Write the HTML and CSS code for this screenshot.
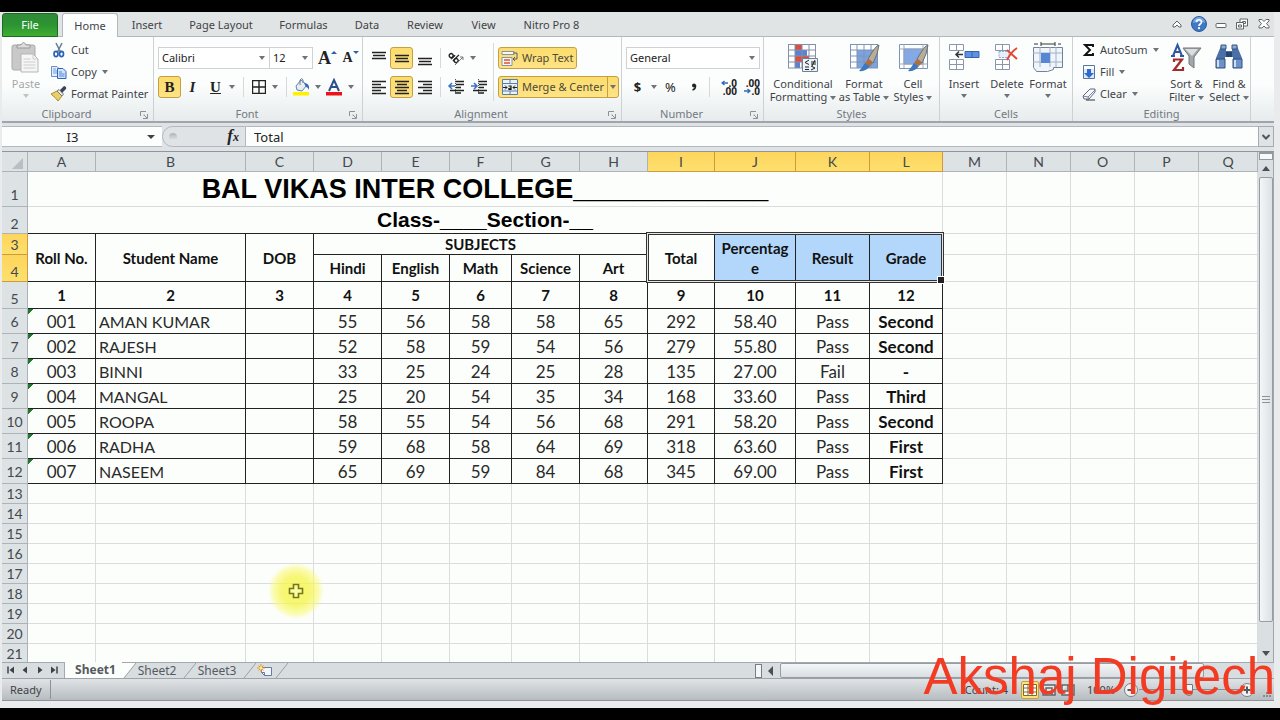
FILE: index.html
```html
<!DOCTYPE html>
<html lang="en">
<head>
<meta charset="utf-8">
<title>Spreadsheet</title>
<link rel="stylesheet" href="styles.css">
</head>
<body>
<main class="app">
  <nav class="tabs">
    <button class="tab tab-file">File</button>
    <button class="tab tab-active">Home</button>
    <button class="tab tab-insert">Insert</button>
    <button class="tab tab-layout">Page Layout</button>
    <button class="tab tab-formulas">Formulas</button>
    <button class="tab tab-data">Data</button>
    <button class="tab tab-review">Review</button>
    <button class="tab tab-view">View</button>
    <button class="tab tab-nitro">Nitro Pro 8</button>
    <div class="window-controls">
      <button aria-label="Collapse ribbon"><svg width="12" height="16" viewBox="0 0 12 16"><path d="M2 9 6 5l4 4v2H8L6 9l-2 2H2z" fill="#fff" stroke="#60656a"/></svg></button>
      <button aria-label="Help"><svg width="16" height="16" viewBox="0 0 16 16"><circle cx="8" cy="8" r="7.5" fill="#3f78c4" stroke="#2c5aa0"/><path d="M2 7a6 6 0 0 1 12 0q-6-3-12 0z" fill="#79a8e0"/><path d="M5.500 6.200C5.500 3 10.500 3 10.500 6c0 2-2.500 2-2.500 4" fill="none" stroke="#fff" stroke-width="1.700"/><circle cx="8" cy="12.200" r="1.100" fill="#fff"/></svg></button>
      <button aria-label="Minimize"><svg width="12" height="16" viewBox="0 0 12 16"><rect x="1" y="7.500" width="10" height="4" rx="1" fill="#fff" stroke="#60656a"/></svg></button>
      <button aria-label="Restore"><svg width="14" height="16" viewBox="0 0 14 16"><path d="M5 3h7.500v7H5z" fill="#fff" stroke="#60656a"/><path d="M7.500 5.500h3v2h-3z" fill="none" stroke="#60656a"/><path d="M1.500 6.500h7v6.500h-7z" fill="#fff" stroke="#60656a"/><path d="M3.500 9h3v2h-3z" fill="none" stroke="#60656a"/></svg></button>
      <button aria-label="Close"><svg width="14" height="16" viewBox="0 0 14 16"><path d="M2 3.500h3l2 2 2-2h3v1.500L9.500 7.500 12 10.500V12H9L7 10l-2 2H2v-1.500l2.500-3L2 5z" fill="#fff" stroke="#60656a"/></svg></button>
    </div>
  </nav>

  <section class="ribbon">
    <div class="group group-clipboard">
      <div class="group-body">
        <button class="big big-paste" disabled><svg width="30" height="32" viewBox="0 0 30 32"><rect x="1" y="3" width="23" height="25" rx="2" fill="#c9c9c9" stroke="#aaa"/><path d="M6 6V3h4q2.500-5 5 0h4v3z" fill="#ddd" stroke="#999"/><path d="M10 12h12l5 5v13H10z" fill="#f6f6f6" stroke="#b5b5b5"/><path d="M22 12v5h5M12.500 17h7M12.500 20h12M12.500 23h12M12.500 26h12" fill="none" stroke="#ccc"/></svg><span>Paste</span><i class="caret"></i></button>
        <div class="stack">
          <button class="small"><svg width="18" height="16" viewBox="0 0 18 16"><path d="m6 1 5 10M12 1 7 11" stroke="#6b8095" stroke-width="1.600"/><ellipse cx="6" cy="12" rx="2" ry="2.600" fill="none" stroke="#2d62b5" stroke-width="1.700"/><ellipse cx="11.500" cy="12" rx="2" ry="2.600" fill="none" stroke="#2d62b5" stroke-width="1.700"/></svg>Cut</button>
          <button class="small"><svg width="18" height="16" viewBox="0 0 18 16"><path d="M1.500 2.500H7l3 3v7H1.500z" fill="#e6f0fc" stroke="#6d8fc0"/><path d="M3 5h3M3 7h5M3 9h5" stroke="#6d9ade"/><path d="M7.500 4.500H13l3 3v7H7.500z" fill="#d2e4fb" stroke="#2f66ba"/><path d="M9 8h3M9 10h5.500M9 12h5.500" stroke="#4d87da"/></svg>Copy<i class="caret"></i></button>
          <button class="small"><svg width="18" height="16" viewBox="0 0 18 16"><path d="m1 8 6-3 5 5-4 5q-2-3-7-7z" fill="#e8cf68" stroke="#b18d2c"/><path d="m7 5 2-1.500L13.500 8 12 10z" fill="#eee" stroke="#777"/><path d="m10 4 4-4q3 1 2 3l-4 4z" fill="#3d4358"/></svg>Format Painter</button>
        </div>
      </div>
      <footer class="with-launcher">Clipboard<svg class="launcher" width="8" height="8" viewBox="0 0 8 8"><path d="M.5 5V.5H6M3.500 4h1M7.500 3v4.500H3M7 7 4 4" fill="none" stroke="#8c9298"/></svg></footer>
    </div>

    <div class="group group-font">
      <div class="group-body rows">
        <div class="row">
          <label class="combo combo-font"><select aria-label="Font"><option>Calibri</option></select></label>
          <label class="combo combo-size"><select aria-label="Font size"><option>12</option></select></label>
          <button class="tool grow-font" aria-label="Increase font size"><b class="serif">A</b><i class="up"></i></button>
          <button class="tool shrink-font" aria-label="Decrease font size"><b class="serif">A</b><i class="down"></i></button>
        </div>
        <div class="row">
          <button class="tool on"><b class="serif">B</b></button>
          <button class="tool"><b class="serif italic">I</b></button>
          <button class="tool"><b class="serif underline">U</b></button>
          <i class="caret"></i><i class="sep"></i>
          <button class="tool" aria-label="Borders"><svg width="14" height="14" viewBox="0 0 14 14"><path d="M.5.5h13v13H.5zM7 0v14M0 7h14" fill="none" stroke="#222" stroke-width="1.400"/></svg></button>
          <i class="caret"></i><i class="sep"></i>
          <button class="tool" aria-label="Fill color"><svg width="17" height="18" viewBox="0 0 17 18"><path d="m3 8 5-6 6 5-5 6-5-1z" fill="#e6edf6" stroke="#68809c"/><path d="M7 7V2q2-3 3 0v3" fill="none" stroke="#68809c"/><path d="M11 5q6 0 5 7-1-3-3-3z" fill="#3569b7"/><path d="M0 14h16v3.500H0z" fill="#fff000"/></svg></button>
          <i class="caret"></i>
          <button class="tool" aria-label="Font color"><svg width="17" height="18" viewBox="0 0 17 18"><path d="m3 13 5-11 5 11M5 9h6" fill="none" stroke="#2d4f8b" stroke-width="2"/><path d="M0 14h16v3.500H0z" fill="#ee1118"/></svg></button>
          <i class="caret"></i>
        </div>
      </div>
      <footer class="with-launcher">Font<svg class="launcher" width="8" height="8" viewBox="0 0 8 8"><path d="M.5 5V.5H6M3.500 4h1M7.500 3v4.500H3M7 7 4 4" fill="none" stroke="#8c9298"/></svg></footer>
    </div>

    <div class="group group-align">
      <div class="group-body">
        <div class="rows">
          <div class="row">
            <button class="tool" aria-label="Top align"><svg width="16" height="16" viewBox="0 0 16 16"><path d="M1 2.500h14M2 5.500h12M1 8.500h14" stroke="#222" stroke-width="1.600"/></svg></button>
            <button class="tool on" aria-label="Middle align"><svg width="16" height="16" viewBox="0 0 16 16"><path d="M1 5.500h14M2 8.500h12M1 11.500h14" stroke="#222" stroke-width="1.600"/></svg></button>
            <button class="tool" aria-label="Bottom align"><svg width="16" height="16" viewBox="0 0 16 16"><path d="M1 8.500h14M2 11.500h12M1 14.500h14" stroke="#222" stroke-width="1.600"/></svg></button>
            <i class="sep"></i>
            <button class="tool" aria-label="Orientation"><svg width="18" height="16" viewBox="0 0 18 16"><g transform="rotate(45 6 7)" fill="none" stroke="#222" stroke-width="1.400"><circle cx="3" cy="8" r="2"/><path d="M5.500 5v5.500M8 2v8.500"/><circle cx="10" cy="8" r="2"/></g><path d="m7 15 8-8M12 7h3v3" fill="none" stroke="#777"/></svg></button>
            <i class="caret"></i>
          </div>
          <div class="row">
            <button class="tool" aria-label="Align left"><svg width="16" height="16" viewBox="0 0 16 16"><path d="M1 2.500h14M1 5.500h9M1 8.500h14M1 11.500h9M1 14.500h14" stroke="#222" stroke-width="1.600"/></svg></button>
            <button class="tool on" aria-label="Center"><svg width="16" height="16" viewBox="0 0 16 16"><path d="M1 2.500h14M3 5.500h10M1 8.500h14M3 11.500h10M1 14.500h14" stroke="#222" stroke-width="1.600"/></svg></button>
            <button class="tool" aria-label="Align right"><svg width="16" height="16" viewBox="0 0 16 16"><path d="M1 2.500h14M6 5.500h9M1 8.500h14M6 11.500h9M1 14.500h14" stroke="#222" stroke-width="1.600"/></svg></button>
            <i class="sep"></i>
            <button class="tool" aria-label="Decrease indent"><svg width="17" height="16" viewBox="0 0 17 16"><path d="M7 2.500h9M8 5.500h8M8 8.500h5M2 11.500h14M7 14h6" stroke="#222" stroke-width="1.700"/><path d="M7 7H1m3-3L1 7l3 3" fill="none" stroke="#3870c8" stroke-width="1.500"/><path d="M7.500 0v16" stroke="#555" stroke-dasharray="1 1"/></svg></button>
            <button class="tool" aria-label="Increase indent"><svg width="17" height="16" viewBox="0 0 17 16"><path d="M7 2.500h9M8 5.500h8M8 8.500h5M2 11.500h14M7 14h6" stroke="#222" stroke-width="1.700"/><path d="M0 7h6M3 4l3 3-3 3" fill="none" stroke="#3870c8" stroke-width="1.500"/><path d="M7.500 0v16" stroke="#555" stroke-dasharray="1 1"/></svg></button>
          </div>
        </div>
        <i class="sep tall"></i>
        <div class="rows">
          <button class="labelled on"><svg width="18" height="17" viewBox="0 0 18 17"><path d="M1 1.500h12v3H1zM1 7.500h10v8H1z" fill="#f5f7f9" stroke="#8894a0"/><path d="M3 10h6M3 13h6" stroke="#d8542f" stroke-width="1.500"/><path d="M12 3h4v6h-4m2-2-2 2 2 2" fill="none" stroke="#4f5c66"/></svg>Wrap Text</button>
          <button class="labelled on merge"><svg width="18" height="17" viewBox="0 0 18 17"><path d="M1.500.5h15v15h-15zM1 4.500h16M1 12h16M9 0v4M9 12v4" fill="#eaf2fb" stroke="#5c7ea5"/><path d="M2 8.500h4M12 8.500h4M4 6.500l2 2-2 2M14 6.500l-2 2 2 2" fill="none" stroke="#222"/><path d="M7.500 7h2.500v3.500H8q-1-1.500 2-1.500" fill="none" stroke="#111" stroke-width="1.200"/></svg>Merge &amp; Center<span class="split"><i class="caret"></i></span></button>
        </div>
      </div>
      <footer class="with-launcher">Alignment<svg class="launcher" width="8" height="8" viewBox="0 0 8 8"><path d="M.5 5V.5H6M3.500 4h1M7.500 3v4.500H3M7 7 4 4" fill="none" stroke="#8c9298"/></svg></footer>
    </div>

    <div class="group group-number">
      <div class="group-body rows">
        <div class="row"><label class="combo combo-format"><select aria-label="Number format"><option>General</option></select></label></div>
        <div class="row">
          <button class="tool money"><b>$</b></button><i class="caret"></i>
          <button class="tool percent">%</button>
          <button class="tool" aria-label="Comma style"><svg width="8" height="14" viewBox="0 0 8 14"><circle cx="4" cy="5.500" r="2" fill="#222"/><path d="M5.500 5q.5 4-3 5" fill="none" stroke="#222" stroke-width="1.500"/></svg></button>
          <i class="sep"></i>
          <button class="tool decimals"><span><svg width="7" height="6" viewBox="0 0 7 6"><path d="M7 3H1m2.500-2L1 3l2.500 2" fill="none" stroke="#3468bb" stroke-width="1.400"/></svg>.0</span><span>.00</span></button>
          <button class="tool decimals"><span>.00</span><span><svg width="7" height="6" viewBox="0 0 7 6"><path d="M0 3h6M3.500 1 6 3 3.500 5" fill="none" stroke="#3468bb" stroke-width="1.400"/></svg>.0</span></button>
        </div>
      </div>
      <footer class="with-launcher">Number<svg class="launcher" width="8" height="8" viewBox="0 0 8 8"><path d="M.5 5V.5H6M3.500 4h1M7.500 3v4.500H3M7 7 4 4" fill="none" stroke="#8c9298"/></svg></footer>
    </div>

    <div class="group group-styles">
      <div class="group-body">
        <button class="big big-cond"><svg width="32" height="32" viewBox="0 0 32 32"><path d="M1 2h28v24H1z" fill="#fff"/><path d="M8 2h7v6H8zM8 14h14v6H8z" fill="#e04b3c"/><path d="M8 8h12v6H8zM8 20h5v6H8z" fill="#5b82d0"/><path d="M1.500 2v24M8 2v24M15 2v24M22 2v24M28.500 2v24M1 2.500h28M1 8h28M1 14h28M1 20h28M1 26h28" stroke="#8290a8"/><path d="M15.500 16.500h15v13h-15z" fill="#eef3f8" stroke="#6d8195"/><path d="m22 18-4 2.500 4 2M18 25h4M18 27.500h4M24 20h5M24 22h5M28 18l-3 6M24 24l4 2-4 2" fill="none" stroke="#222"/></svg><span>Conditional<br>Formatting<i class="caret"></i></span></button>
        <button class="big big-table"><svg width="32" height="32" viewBox="0 0 32 32"><path d="M2 2h28v24H2z" fill="#fff"/><path d="M9 8h21v18H9z" fill="#7ba3e0"/><path d="M2.500 2v24M9 2v24M16 2v24M23 2v24M29.500 2v24M2 2.500h28M2 8h28M2 14h28M2 20h28M2 26h28" stroke="#7e94b4"/><path d="M31 3q-3 0-11 14l5 4Q30 12 31 3z" fill="#b9ad96" stroke="#65717c"/><path d="m20 17 5 4-3 3-5-3z" fill="#b36e39"/><path d="M17 21q-3 5-6 8 7 1 11-5z" fill="#3d77bd"/></svg><span>Format<br>as Table<i class="caret"></i></span></button>
        <button class="big big-cell"><svg width="32" height="32" viewBox="0 0 32 32"><path d="M2.500 2.500h28v24h-28z" fill="#fff" stroke="#7e94b4"/><path d="M7 7h19v15H7z" fill="#83a9e6" stroke="#7e94b4"/><path d="M2 7h28M2 22h28M7 2v24M26 2v24" stroke="#9aa9bf"/><path d="M31 3q-3 0-11 14l5 4Q30 12 31 3z" fill="#b9ad96" stroke="#65717c"/><path d="m20 17 5 4-3 3-5-3z" fill="#b36e39"/><path d="M17 21q-3 5-6 8 7 1 11-5z" fill="#3d77bd"/></svg><span>Cell<br>Styles<i class="caret"></i></span></button>
      </div>
      <footer>Styles</footer>
    </div>

    <div class="group group-cells">
      <div class="group-body">
        <button class="big big-insert"><svg width="32" height="32" viewBox="0 0 32 32"><path d="M1.500 2.500h14v6h-14zM1.500 17.500h14v10h-14zM8.500 2v6M8.500 17v10M1 22.500h14" fill="#fff" stroke="#8a97aa"/><path d="M17 9.500h14v6H17z" fill="#5f92e2" stroke="#3862aa"/><path d="M24 9v6" stroke="#3862aa"/><path d="M15 12.500H8m3-3-3 3 3 3" fill="none" stroke="#333" stroke-width="1.500"/></svg><span>Insert</span><i class="caret"></i></button>
        <button class="big big-delete"><svg width="32" height="32" viewBox="0 0 32 32"><path d="M4.500 2.500h14v6h-14zM4.500 17.500h14v10h-14zM11.500 2v6M11.500 17v10M4 22.500h14" fill="#fff" stroke="#8a97aa"/><path d="M8 9.500h10v6H8z" fill="#e7effa" stroke="#8bace0" stroke-dasharray="2 1"/><path d="m16 8 10 9M26 6q-6 4-10 12" fill="none" stroke="#e34834" stroke-width="2"/></svg><span>Delete</span><i class="caret"></i></button>
        <button class="big big-format"><svg width="32" height="32" viewBox="0 0 32 32"><path d="M9 2h14M9 0v4M23 0v4M2 2h4M26 2h3" stroke="#333"/><path d="M1.500 5.500h29v20h-9v2l-6 2h-11l-3-4z" fill="#f0f5fb" stroke="#71839b"/><path d="M8 5v20M18 5v20M24 5v20M1 11h29M1 20h29" stroke="#a2b1c5"/><path d="M9 11h9v10H9z" fill="#5687d5"/></svg><span>Format</span><i class="caret"></i></button>
      </div>
      <footer>Cells</footer>
    </div>

    <div class="group group-editing">
      <div class="group-body">
        <div class="stack">
          <button class="small"><svg width="16" height="16" viewBox="0 0 16 16"><path d="M12 5V3H4l5 5-5 5h8v-2" fill="none" stroke="#111" stroke-width="1.900"/></svg>AutoSum<i class="caret"></i></button>
          <button class="small"><svg width="16" height="16" viewBox="0 0 16 16"><path d="M2.500 1.500h11v13h-11z" fill="#dce8f6" stroke="#55759e"/><path d="M3 2h10v3H3z" fill="#fff"/><path d="M6 5h4v4h3l-5 5-5-5h3z" fill="#2d69ce"/></svg>Fill<i class="caret"></i></button>
          <button class="small"><svg width="16" height="16" viewBox="0 0 16 16"><path d="m2 10 7-7h5v3l-6 7H3z" fill="#f6f8fc" stroke="#5e6977"/><path d="m2 10 5 1 7-7M7 11l1 2" fill="none" stroke="#7782a0"/><path d="M5 14h9" stroke="#333"/></svg>Clear<i class="caret"></i></button>
        </div>
        <button class="big big-sort"><svg width="32" height="32" viewBox="0 0 32 32"><path d="M13 6h18l-7 9v11l-5-4v-8z" fill="#a4a8aa" stroke="#707779"/><path d="M15 7h13l-6 7z" fill="#dcdedf"/><path d="M3 14 7.500 3 12 14M5 10h6M1 14h4M10 14h4" fill="none" stroke="#3057a0" stroke-width="2"/><path d="M4 20v-2.500h8L4 28h9v-3" fill="none" stroke="#a32a2b" stroke-width="2.200"/></svg><span>Sort &amp;<br>Filter<i class="caret"></i></span></button>
        <button class="big big-find"><svg width="32" height="32" viewBox="0 0 32 32"><path d="M8 4h5v5h6V4h5l5 12v10h-9V15h-8v11H3V16z" fill="#4b70a8"/><path d="M8 3h5v4H8zM19 3h5v4h-5z" fill="#8ca9d4" stroke="#36547f"/><path d="M3 17h9v9H3zM20 17h9v9h-9z" fill="#6d92c8" stroke="#304e7d"/><path d="M5 18v7M22 18v7" stroke="#d0e0f4" stroke-width="2"/><path d="M13 10h6v5h-6z" fill="#27446e"/></svg><span>Find &amp;<br>Select<i class="caret"></i></span></button>
      </div>
      <footer>Editing</footer>
    </div>
  </section>

  <section class="formula-bar">
    <div class="name-box"><input aria-label="Name box" value="I3"><i class="caret dark"></i></div>
    <div class="fx"><i class="knob"></i><span class="fx-mark">f<small>x</small></span></div>
    <input class="formula" aria-label="Formula" value="Total">
    <button class="expand" aria-label="Expand formula bar"><svg width="10" height="8" viewBox="0 0 10 8"><path d="m1.500 2 3.500 3.500L8.500 2" fill="none" stroke="#4e555b" stroke-width="2"/></svg></button>
  </section>

  <section class="work">
    <div class="sheet">
      <table>
        <colgroup><col class="w26"><col class="w68"><col class="w150"><col class="w68"><col class="w68"><col class="w68"><col class="w62"><col class="w68"><col class="w68"><col class="w67"><col class="w81"><col class="w74"><col class="w73"><col class="w64"><col class="w64"><col class="w64"><col class="w64"><col></colgroup>
        <thead><tr><th class="corner"><svg width="11" height="11" viewBox="0 0 11 11"><path d="M11 0v11H0z" fill="#b9bec2"/></svg></th><th>A</th><th>B</th><th>C</th><th>D</th><th>E</th><th>F</th><th>G</th><th>H</th><th class="hot">I</th><th class="hot">J</th><th class="hot">K</th><th class="hot">L</th><th>M</th><th>N</th><th>O</th><th>P</th><th>Q</th></tr></thead>
        <tbody>
          <tr class="r-title"><th>1</th><td colspan="12">BAL VIKAS INTER COLLEGE_____________</td><td></td><td></td><td></td><td></td><td></td></tr>
          <tr class="r-class"><th>2</th><td class="k" colspan="12">Class-____Section-__</td><td></td><td></td><td></td><td></td><td></td></tr>
          <tr class="r-head r-three"><th class="hot">3</th><td class="k" rowspan="2">Roll No.</td><td class="k" rowspan="2">Student Name</td><td class="k" rowspan="2">DOB</td><td class="k" colspan="5">SUBJECTS</td><td class="k" rowspan="2">Total</td><td class="k sel" rowspan="2">Percentag<br>e</td><td class="k sel" rowspan="2">Result</td><td class="k sel" rowspan="2">Grade</td><td></td><td></td><td></td><td></td><td></td></tr>
          <tr class="r-head"><th class="hot">4</th><td class="k">Hindi</td><td class="k">English</td><td class="k">Math</td><td class="k">Science</td><td class="k">Art</td><td></td><td></td><td></td><td></td><td></td></tr>
          <tr class="r-head"><th>5</th><td class="k">1</td><td class="k">2</td><td class="k">3</td><td class="k">4</td><td class="k">5</td><td class="k">6</td><td class="k">7</td><td class="k">8</td><td class="k">9</td><td class="k">10</td><td class="k">11</td><td class="k">12</td><td></td><td></td><td></td><td></td><td></td></tr>
          <tr class="r-data"><th>6</th><td class="k flag">001</td><td class="k name">AMAN KUMAR</td><td class="k"></td><td class="k">55</td><td class="k">56</td><td class="k">58</td><td class="k">58</td><td class="k">65</td><td class="k">292</td><td class="k">58.40</td><td class="k">Pass</td><td class="k grade">Second</td><td></td><td></td><td></td><td></td><td></td></tr>
          <tr class="r-data"><th>7</th><td class="k flag">002</td><td class="k name">RAJESH</td><td class="k"></td><td class="k">52</td><td class="k">58</td><td class="k">59</td><td class="k">54</td><td class="k">56</td><td class="k">279</td><td class="k">55.80</td><td class="k">Pass</td><td class="k grade">Second</td><td></td><td></td><td></td><td></td><td></td></tr>
          <tr class="r-data"><th>8</th><td class="k flag">003</td><td class="k name">BINNI</td><td class="k"></td><td class="k">33</td><td class="k">25</td><td class="k">24</td><td class="k">25</td><td class="k">28</td><td class="k">135</td><td class="k">27.00</td><td class="k">Fail</td><td class="k grade">-</td><td></td><td></td><td></td><td></td><td></td></tr>
          <tr class="r-data"><th>9</th><td class="k flag">004</td><td class="k name">MANGAL</td><td class="k"></td><td class="k">25</td><td class="k">20</td><td class="k">54</td><td class="k">35</td><td class="k">34</td><td class="k">168</td><td class="k">33.60</td><td class="k">Pass</td><td class="k grade">Third</td><td></td><td></td><td></td><td></td><td></td></tr>
          <tr class="r-data"><th>10</th><td class="k flag">005</td><td class="k name">ROOPA</td><td class="k"></td><td class="k">58</td><td class="k">55</td><td class="k">54</td><td class="k">56</td><td class="k">68</td><td class="k">291</td><td class="k">58.20</td><td class="k">Pass</td><td class="k grade">Second</td><td></td><td></td><td></td><td></td><td></td></tr>
          <tr class="r-data"><th>11</th><td class="k flag">006</td><td class="k name">RADHA</td><td class="k"></td><td class="k">59</td><td class="k">68</td><td class="k">58</td><td class="k">64</td><td class="k">69</td><td class="k">318</td><td class="k">63.60</td><td class="k">Pass</td><td class="k grade">First</td><td></td><td></td><td></td><td></td><td></td></tr>
          <tr class="r-data"><th>12</th><td class="k flag">007</td><td class="k name">NASEEM</td><td class="k"></td><td class="k">65</td><td class="k">69</td><td class="k">59</td><td class="k">84</td><td class="k">68</td><td class="k">345</td><td class="k">69.00</td><td class="k">Pass</td><td class="k grade">First</td><td></td><td></td><td></td><td></td><td></td></tr>
          <tr><th>13</th><td></td><td></td><td></td><td></td><td></td><td></td><td></td><td></td><td></td><td></td><td></td><td></td><td></td><td></td><td></td><td></td><td></td></tr>
          <tr><th>14</th><td></td><td></td><td></td><td></td><td></td><td></td><td></td><td></td><td></td><td></td><td></td><td></td><td></td><td></td><td></td><td></td><td></td></tr>
          <tr><th>15</th><td></td><td></td><td></td><td></td><td></td><td></td><td></td><td></td><td></td><td></td><td></td><td></td><td></td><td></td><td></td><td></td><td></td></tr>
          <tr><th>16</th><td></td><td></td><td></td><td></td><td></td><td></td><td></td><td></td><td></td><td></td><td></td><td></td><td></td><td></td><td></td><td></td><td></td></tr>
          <tr><th>17</th><td></td><td></td><td></td><td></td><td></td><td></td><td></td><td></td><td></td><td></td><td></td><td></td><td></td><td></td><td></td><td></td><td></td></tr>
          <tr><th>18</th><td></td><td></td><td></td><td></td><td></td><td></td><td></td><td></td><td></td><td></td><td></td><td></td><td></td><td></td><td></td><td></td><td></td></tr>
          <tr><th>19</th><td></td><td></td><td></td><td></td><td></td><td></td><td></td><td></td><td></td><td></td><td></td><td></td><td></td><td></td><td></td><td></td><td></td></tr>
          <tr><th>20</th><td></td><td></td><td></td><td></td><td></td><td></td><td></td><td></td><td></td><td></td><td></td><td></td><td></td><td></td><td></td><td></td><td></td></tr>
          <tr><th>21</th><td></td><td></td><td></td><td></td><td></td><td></td><td></td><td></td><td></td><td></td><td></td><td></td><td></td><td></td><td></td><td></td><td></td></tr>
        </tbody>
      </table>
      <div class="selection"></div>
      <div class="pointer"><svg width="16" height="16" viewBox="0 0 16 16"><path d="M5.500 1.500h5v4h4v5h-4v4h-5v-4h-4v-5h4z" fill="#fbfba0" stroke="#77771a" stroke-width="1.600"/></svg></div>
    </div>
    <div class="vscroll">
      <div class="splitter"></div>
      <i class="up"></i>
      <div class="vthumb"><i></i></div>
      <i class="down"></i>
    </div>
  </section>

  <section class="sheet-bar">
    <div class="sheet-nav">
      <button aria-label="First sheet"><svg width="8" height="8" viewBox="0 0 8 8"><path d="M1 .5v7" stroke="#3c4248" stroke-width="1.500"/><path d="M7 .5v7L2.500 4z" fill="#3c4248"/></svg></button>
      <button aria-label="Previous sheet"><svg width="8" height="8" viewBox="0 0 8 8"><path d="M6 .5v7L1.500 4z" fill="#3c4248"/></svg></button>
      <button aria-label="Next sheet"><svg width="8" height="8" viewBox="0 0 8 8"><path d="M2 .5v7L6.500 4z" fill="#3c4248"/></svg></button>
      <button aria-label="Last sheet"><svg width="8" height="8" viewBox="0 0 8 8"><path d="M7 .5v7" stroke="#3c4248" stroke-width="1.500"/><path d="M1 .5v7L5.500 4z" fill="#3c4248"/></svg></button>
    </div>
    <button class="sheet-tab current">Sheet1</button><svg class="slope" width="14" height="16" viewBox="0 0 14 16"><path d="M0 0h14L2 15H0z" fill="#fcfefb"/><path d="M14 0 2 15" stroke="#9aa0a5"/></svg>
    <button class="sheet-tab">Sheet2</button><svg class="slope" width="14" height="16" viewBox="0 0 14 16"><path d="M14 0 2 15" stroke="#9aa0a5"/></svg>
    <button class="sheet-tab">Sheet3</button><svg class="slope" width="14" height="16" viewBox="0 0 14 16"><path d="M14 0 2 15" stroke="#9aa0a5"/></svg>
    <button class="new-sheet" aria-label="Insert worksheet"><svg width="16" height="14" viewBox="0 0 16 14"><path d="M4.500 3.500h10v8h-7l-3-3z" fill="#f3f6fc" stroke="#667aa2"/><path d="M4.500 8.500h3v3" fill="none" stroke="#667aa2"/><path d="M4 0v8M0 4h8M1.500 1.500l5 5M6.500 1.500l-5 5" stroke="#e39a24"/><circle cx="4" cy="4" r="1.500" fill="#ffe890"/></svg></button><svg class="slope" width="14" height="16" viewBox="0 0 14 16"><path d="M14 0 2 15" stroke="#9aa0a5"/></svg>
    <div class="hscroll">
      <i class="grip"></i>
      <svg width="6" height="10" viewBox="0 0 6 10"><path d="M5 0v10L0 5z" fill="#4a5056"/></svg>
      <div class="hthumb"></div>
      <svg width="6" height="10" viewBox="0 0 6 10"><path d="M1 0v10l5-5z" fill="#4a5056"/></svg>
    </div>
  </section>

  <footer class="status">
    <span class="ready">Ready</span>
    <span class="count">Count: 4</span>
    <div class="views">
      <button class="view-on" aria-label="Normal view"><svg width="14" height="12" viewBox="0 0 14 12"><path d="M.5.5h13v11H.5zM0 4h14M0 8h14M5 0v12M9 0v12" fill="#fff" stroke="#7d6c2a"/></svg></button>
      <button aria-label="Page layout view"><svg width="14" height="12" viewBox="0 0 14 12"><path d="M1 1h12v10H1zM4 4h6v7H4z" fill="#e8eaec" stroke="#5f666c" stroke-width="1.500"/></svg></button>
      <button aria-label="Page break view"><svg width="14" height="12" viewBox="0 0 14 12"><path d="M1 1h12v10H1zM1 7h6V1" fill="#e8eaec" stroke="#5f666c" stroke-width="1.500"/></svg></button>
    </div>
    <span class="percent-text">100%</span>
    <button class="zoom-btn" aria-label="Zoom out"><svg width="16" height="16" viewBox="0 0 16 16"><circle cx="8" cy="8" r="6.500" fill="#eff1f2" stroke="#7a8086"/><path d="M4.500 8h7" stroke="#555b61" stroke-width="2"/></svg></button>
    <input class="zoom" type="range" min="0" max="100" value="50" aria-label="Zoom">
    <button class="zoom-btn" aria-label="Zoom in"><svg width="16" height="16" viewBox="0 0 16 16"><circle cx="8" cy="8" r="6.500" fill="#eff1f2" stroke="#7a8086"/><path d="M4.500 8h7M8 4.500v7" stroke="#555b61" stroke-width="2"/></svg></button>
    <svg class="resize" width="10" height="10" viewBox="0 0 10 10"><path d="M7 1h2M7 4h2M4 4h2M7 7h2M4 7h2M1 7h2" stroke="#858b90" stroke-width="2"/></svg>
  </footer>
</main>
<div class="watermark">Akshaj Digitech</div>
</body>
</html>
```

FILE: styles.css
```css
* { box-sizing: border-box; }
body {
  margin: 0;
  height: 100vh;
  padding: 12px 0;
  background: #000;
  overflow: hidden;
  color: #3f4347;
  font: 11px/14px "Noto Sans", "Open Sans", sans-serif;
}
button, input, select { font: inherit; color: inherit; margin: 0; padding: 0; border: 0; background: none; }
button { display: flex; align-items: center; justify-content: center; white-space: nowrap; }
svg { display: block; flex: none; }
i { flex: none; }

.app {
  height: 100%;
  display: flex;
  flex-direction: column;
  padding: 0 6px 7px 2px;
  background: #e9ebec;
}

/* Ribbon tabs */
.tabs { display: flex; height: 25px; flex: none; background: #e1e4e5; border-bottom: 1px solid #b3b8bc; }
.tab { height: 24px; padding-top: 2px; }
.tab-file { width: 56px; margin-top: 1px; padding-top: 0; color: #fff; background: linear-gradient(#2f8a37, #2c9432 50%, #3fae31); border: 1px solid #1d6a27; border-radius: 3px 3px 0 0; }
.tab-active { width: 56px; height: 24px; margin: 1px 0 0 4px; padding: 0; background: #fcfefd; border: 1px solid #b3b8bc; border-bottom: 0; border-radius: 3px 3px 0 0; box-shadow: 0 1px #fcfefd; }
.tab-insert { width: 58px; }
.tab-layout { width: 90px; }
.tab-formulas { width: 75px; }
.tab-data { width: 52px; }
.tab-review { width: 64px; }
.tab-view { width: 53px; }
.tab-nitro { width: 83px; }
.window-controls { display: flex; align-items: center; gap: 8px; margin-left: auto; padding-right: 3px; }

/* Ribbon */
.ribbon { display: flex; flex: none; height: 86px; background: linear-gradient(#fcfefd 55%, #e7ebed); border-bottom: 2px solid #9fa5aa; }
.group { display: flex; flex-direction: column; border-right: 1px solid #cdd1d4; }
.group-body { display: flex; flex: 1; padding-top: 2px; }
.group footer { display: flex; align-items: center; justify-content: center; height: 14px; color: #73797f; position: relative; }
.group .with-launcher { padding-right: 22px; }
.launcher { position: absolute; right: 5px; bottom: 2px; }
.group-clipboard { width: 152px; }
.group-font { width: 209px; }
.group-align { width: 259px; }
.group-number { width: 142px; }
.group-styles { width: 176px; }
.group-cells { width: 133px; }
.group-editing { width: 178px; }

.caret { display: inline-block; border: 3px solid transparent; border-top: 4px solid #6e7378; border-bottom: 0; vertical-align: middle; }
.big { flex-direction: column; justify-content: flex-start; padding-top: 2px; line-height: 13px; }
.big svg { margin: 1px 0 3px; }
.big > span { text-align: center; }
.big span .caret { margin-left: 3px; }
.big > .caret { margin-top: 4px; }
.big-paste { width: 48px; color: #a5a8aa; }
.big-paste .caret { border-top-color: #c0c3c5; }
.big-cond { width: 66px; margin-left: 6px; }
.big-table { width: 56px; }
.big-cell { width: 42px; }
.big-insert { width: 44px; margin-left: 2px; }
.big-delete { width: 42px; }
.big-format { width: 40px; }
.big-sort { width: 44px; margin-left: 6px; }
.big-find { width: 42px; }
.stack { display: flex; flex-direction: column; align-items: flex-start; }
.stack .small { height: 22px; gap: 3px; }
.stack .small .caret { margin-left: 2px; }
.group-editing .stack { width: 78px; margin-left: 8px; }

.rows { display: flex; flex-direction: column; gap: 7px; }
.group-body.rows, .group-align .group-body { padding-top: 10px; }
.row { display: flex; align-items: center; height: 22px; }
.row > .caret { margin: 0 2px; }
.tool { width: 23px; height: 22px; flex: none; color: #222; }
.on { background: linear-gradient(#fbdc6d, #ffe385); border: 1px solid #c5a040; border-radius: 3px; }
.serif { font: bold 15px/18px "Liberation Serif", serif; }
.italic { font-style: italic; }
.underline { text-decoration: underline; }
.sep { width: 1px; height: 20px; margin: 0 3px 0 6px; background: #d5d9dc; }
.group-font .rows { padding-left: 4px; }
.grow-font { margin-left: 3px; }
.grow-font .serif { font-size: 18px; }
.shrink-font .serif { font-size: 14px; }
.tool .up, .tool .down { align-self: flex-start; margin-top: 4px; }
.up { border: 3px solid transparent; border-bottom: 3px solid #2f5fac; border-top: 0; }
.down { border: 3px solid transparent; border-top: 3px solid #2f5fac; border-bottom: 0; }
.combo { display: grid; align-items: center; height: 22px; border: 1px solid #cfd2d5; background: #fff; color: #222; }
.combo select { grid-area: 1 / 1; appearance: none; padding-left: 3px; width: 100%; height: 20px; outline: 0; }
.combo::after { content: ""; grid-area: 1 / 1; justify-self: end; margin-right: 4px; border: 3px solid transparent; border-top: 4px solid #6e7378; border-bottom: 0; pointer-events: none; }
.combo-font { width: 112px; }
.combo-size { width: 43px; border-left: 0; }
.combo-format { width: 134px; }
.group-align .group-body { padding-left: 4px; }
.group-align .sep, .group-number .sep { margin: 0 4px; }
.group-align .sep.tall { height: 58px; margin: -4px 4px 0 2px; }
.labelled { height: 22px; gap: 3px; padding: 0 3px 0 2px; align-self: flex-start; color: #4c4a38; }
.merge { padding-right: 0; }
.split { display: flex; align-items: center; height: 20px; padding: 0 2px; border-left: 1px solid #c5a040; }
.group-number .rows { padding-left: 4px; }
.money, .percent { font-size: 13px; }
.decimals { flex-direction: column; align-items: flex-end; justify-content: center; font-size: 10px; line-height: 8px; font-weight: bold; }
.decimals span { display: flex; align-items: center; }

/* Formula bar */
.formula-bar { display: flex; flex: none; height: 29px; padding: 3px 0 4px; background: #dfe3e6; border-bottom: 1px solid #90969b; font-size: 13px; color: #222; }
.name-box { display: flex; align-items: center; width: 160px; background: #fcfefd; border-top: 1px solid #b3b8bc; border-bottom: 1px solid #b3b8bc; padding-right: 7px; }
.name-box input { flex: 1; width: 0; text-align: center; padding-right: 4px; }
.dark { border-top-color: #3c4248; border-width: 4px 4px 0; }
.fx { display: flex; align-items: center; justify-content: space-between; width: 84px; padding: 0 6px; border: 1px solid #b3b8bc; border-radius: 11px 0 0 11px; }
.knob { width: 8px; height: 8px; border-radius: 50%; background: linear-gradient(#aeb3b7, #e8eaec); }
.fx-mark { font: italic bold 17px/18px "Liberation Serif", serif; }
.fx-mark small { font-size: 12px; }
.formula { flex: 1; width: 0; padding-left: 8px; background: #fcfefd; border-top: 1px solid #b3b8bc; border-bottom: 1px solid #b3b8bc; }
.expand { width: 16px; border: 1px solid #a5abb0; }

/* Worksheet */
.work { display: flex; flex: 1; min-height: 0; }
.sheet { position: relative; flex: 1; min-width: 0; overflow: hidden; background: #fcfefb; }
table { width: 100%; table-layout: fixed; border-collapse: separate; border-spacing: 0; font-family: Lato, "Noto Sans", sans-serif; color: #111; }
.w26 { width: 26px; } .w62 { width: 62px; } .w64 { width: 64px; } .w67 { width: 67px; } .w68 { width: 68px; }
.w73 { width: 73px; } .w74 { width: 74px; } .w81 { width: 81px; } .w150 { width: 150px; }
th, td { height: 20px; padding: 0; border-right: 1px solid #dadcdd; border-bottom: 1px solid #dadcdd; text-align: center; white-space: nowrap; }
th { background: #dde2e5; border-color: #adb3b8; color: #44494e; font-weight: normal; font-size: 14px; line-height: 17px; }
tbody th { vertical-align: bottom; padding-bottom: 1px; }
th.hot { background: linear-gradient(#fdd55c, #fde06e); border-color: #d09a3c; }
.corner svg { margin: 3px 0 0 10px; }
.k { border-color: #222; }
.r-title th, .r-data th { padding-bottom: 3px; }
.r-title td { height: 35px; font: bold 27px/34px "Liberation Sans", sans-serif; color: #000; }
.r-class td { height: 27px; font: bold 21px/26px "Liberation Sans", sans-serif; color: #000; border-right-color: #dadcdd; }
.r-head td { height: 27px; font-size: 15px; line-height: 20px; font-weight: bold; }
.r-three td, .r-three th { height: 21px; }
.r-data td { height: 25px; font-size: 17px; line-height: 23px; color: #2a2a2a; }
.r-data .name { text-align: left; padding-left: 3px; font-size: 16px; }
.r-data .grade { font-weight: bold; color: #111; }
.sel { background: #b3d7fb; }
.flag { background: linear-gradient(135deg, #1d7a2a 4px, transparent 4px); }
.selection { position: absolute; left: 645px; top: 81px; width: 296px; height: 49px; border: 1px solid #e4e6e7; box-shadow: 0 0 0 1px #333, inset 0 0 0 1px #333; }
.selection::after { content: ""; position: absolute; right: -3px; bottom: -3px; width: 6px; height: 6px; background: #222; border: 1px solid #fff; }
.pointer { position: absolute; left: 266px; top: 411px; display: grid; place-items: center; width: 56px; height: 56px; border-radius: 50%; background: radial-gradient(rgba(245, 245, 80, .8) 35%, rgba(250, 250, 120, .55) 58%, rgba(250, 250, 150, 0) 71%); }

.vscroll { display: flex; flex-direction: column; align-items: center; width: 16px; padding-bottom: 6px; background: #dadfe2; border-right: 1px solid #9fa5aa; }
.vscroll .up { border-width: 0 4px 5px; border-color: transparent transparent #4a5056; margin: 6px 0; }
.vscroll .down { border-width: 5px 4px 0; border-color: #4a5056 transparent transparent; margin-top: auto; }
.splitter { width: 14px; height: 8px; background: #f7f8f8; border: 1px solid #92989d; border-top-width: 2px; }
.vthumb { display: grid; place-items: center; width: 14px; flex: 0 1 445px; background: linear-gradient(90deg, #f4f6f7, #dce1e5); border: 1px solid #969da3; border-radius: 2px; }
.vthumb i { width: 8px; height: 7px; background: repeating-linear-gradient(#8c9298 0 1px, transparent 1px 3px); }

/* Sheet tabs and horizontal scroll */
.sheet-bar { display: flex; flex: none; height: 17px; background: #d8dde0; border-top: 1px solid #a3a9ae; border-bottom: 1px solid #9da3a8; font-size: 12px; }
.sheet-nav { display: flex; align-items: center; justify-content: space-between; width: 63px; padding: 0 6px 2px 5px; border-right: 1px solid #a3a9ae; }
.sheet-tab { width: 46px; padding-right: 4px; color: #555a5f; }
.sheet-tab.current { width: 57px; margin-top: -1px; padding: 0 0 0 4px; background: #fcfefb; font-weight: bold; }
.new-sheet { width: 18px; }
.hscroll { display: flex; align-items: center; flex: 0 0 519px; margin-left: auto; gap: 6px; padding-right: 18px; }
.grip { width: 7px; height: 14px; background: #f4f6f7; border: 1px solid #777d82; }
.hthumb { flex: 1; height: 15px; background: linear-gradient(#f4f6f7, #d9dee2); border: 1px solid #969da3; border-radius: 2px; margin-right: 40px; }

/* Status bar */
.status { display: flex; align-items: center; flex: none; height: 22px; background: linear-gradient(#dfe3e5, #b7bcc0); border-bottom: 1px solid #8c9297; }
.ready { width: 49px; padding-left: 8px; border-right: 1px solid #8c9297; line-height: 19px; }
.count { margin-left: auto; padding-right: 13px; }
.views { display: flex; gap: 1px; padding-right: 10px; }
.views button { width: 18px; height: 18px; }
.views .view-on { background: #fde27a; border: 1px solid #c5a040; border-radius: 2px; }
.percent-text { width: 36px; }
.zoom { appearance: none; width: 100px; height: 14px; background: linear-gradient(#888e93, #888e93) center / 100% 1px no-repeat; }
.zoom::-webkit-slider-thumb { appearance: none; width: 8px; height: 12px; background: #f1f3f4; border: 1px solid #70767b; border-radius: 1px 1px 4px 4px; }
.resize { margin: 8px 2px 0 7px; }

.watermark { position: absolute; right: 5px; bottom: 14px; font: 51px/58px "Liberation Sans", sans-serif; color: #f33b24; }
```
